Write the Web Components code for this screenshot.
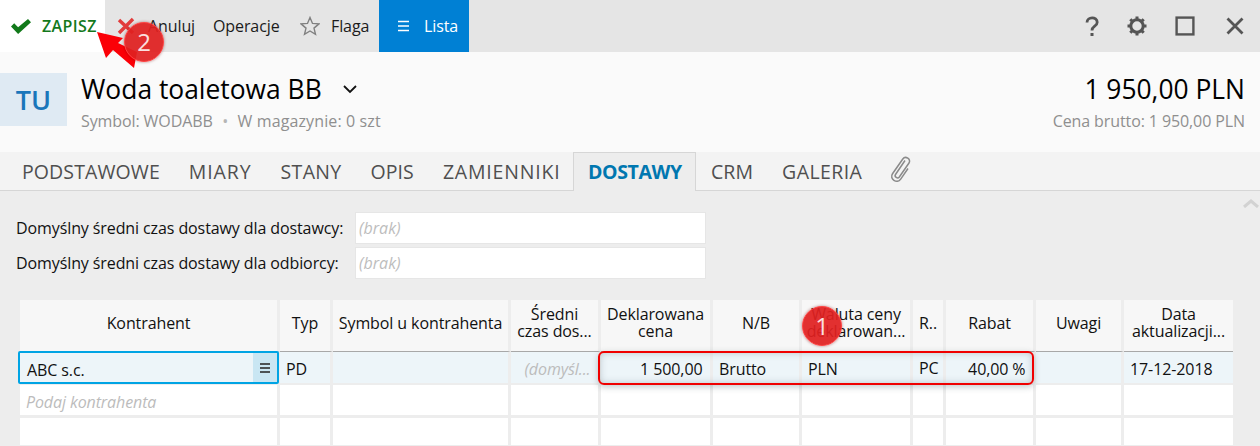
<!DOCTYPE html>
<html lang="pl">
<head>
<meta charset="utf-8">
<title>Woda toaletowa BB</title>
<style>
  html, body { margin: 0; height: 446px; overflow: hidden; }
  body { position: relative; background: #ededed; color: #111; font-family: "Open Sans", "Noto Sans", sans-serif; }
  app-content { display: block; padding-top: 21px; }
</style>
</head>
<body>
  <app-toolbar>
    <tool-button kind="save" style="width:105px;padding-left:10px;--gap:10px"><svg slot="icon" width="22" height="20" viewBox="0 0 22 20"><path d="M1 10.500l3.200-3.200 3.900 3.900L18 3l3 3.200L8.100 18z" fill="#12791a"/></svg>ZAPISZ</tool-button>
    <tool-button style="width:98px;padding-left:11px;--gap:12px"><svg slot="icon" width="20" height="20" viewBox="0 0 20 20"><path d="M3 4l14 13M17 3L3 17" stroke="#e23b3b" stroke-width="3.400" fill="none"/></svg>Anuluj</tool-button>
    <tool-button style="width:85px;padding-left:10px">Operacje</tool-button>
    <tool-button style="width:91px;padding-left:12px"><svg slot="icon" width="20" height="20" viewBox="0 0 20 20"><path d="M10 1.500l2.500 5.900 6.400.5-4.900 4.200 1.500 6.200-5.500-3.300-5.500 3.300 1.500-6.200L1.100 7.900l6.400-.5z" fill="none" stroke="#808080" stroke-width="1.400"/></svg>Flaga</tool-button>
    <tool-button kind="active" style="width:90px;padding-left:18px;--gap:14px"><svg slot="icon" width="13" height="12" viewBox="0 0 13 12"><path d="M1 1.500h11M1 6h11M1 10.500h11" stroke="#fff" stroke-width="1.300"/></svg>Lista</tool-button>
    <svg slot="right" width="24" height="24" viewBox="0 0 24 24"><path d="M7 8.500c0-6 10.200-6 10.200-.3 0 4.300-5.200 3.700-5.200 8.300" fill="none" stroke="#555" stroke-width="2.800"/><rect x="10.500" y="19" width="3" height="3" fill="#555"/></svg>
    <svg slot="right" width="24" height="24" viewBox="0 0 24 24" style="margin-left:21px"><circle cx="12" cy="12" r="6.200" fill="none" stroke="#555" stroke-width="3"/><path d="M12 2.500v4M12 17.500v4M2.500 12h4M17.500 12h4M5.300 5.300l2.800 2.800M15.900 15.900l2.800 2.800M18.700 5.300l-2.800 2.800M8.100 15.900l-2.800 2.800" fill="none" stroke="#555" stroke-width="3"/></svg>
    <svg slot="right" width="24" height="24" viewBox="0 0 24 24" style="margin-left:24px"><rect x="3.600" y="3.600" width="16.800" height="16.800" fill="none" stroke="#555" stroke-width="2.400"/></svg>
    <svg slot="right" width="24" height="24" viewBox="0 0 24 24" style="margin-left:26px"><path d="M4.500 4.500l15 15M19.500 4.500l-15 15" fill="none" stroke="#555" stroke-width="2.800"/></svg>
  </app-toolbar>

  <product-header code="TU" name="Woda toaletowa BB" price="1 950,00 PLN" meta="Symbol: WODABB" stock="W magazynie: 0 szt" gross="Cena brutto: 1 950,00 PLN"></product-header>

  <tab-bar>
    <tab-item>PODSTAWOWE</tab-item>
    <tab-item style="letter-spacing:.9px">MIARY</tab-item>
    <tab-item style="letter-spacing:.3px">STANY</tab-item>
    <tab-item>OPIS</tab-item>
    <tab-item style="letter-spacing:.8px">ZAMIENNIKI</tab-item>
    <tab-item active>DOSTAWY</tab-item>
    <tab-item>CRM</tab-item>
    <tab-item style="letter-spacing:.4px">GALERIA</tab-item>
    <svg width="24" height="28" viewBox="0 0 24 28" style="margin:3px 0 0 11px"><path d="M17 5.500L7.500 19.500c-1.500 2.300 2.200 4.700 3.800 2.500L21 8c2.500-3.700-3.600-7.700-6.200-4L4.500 18.700c-3.500 5.200 4.600 10.500 8.200 5.400l7.300-10.600" fill="none" stroke="#8a8a8a" stroke-width="1.500"/></svg>
  </tab-bar>

  <app-content>
    <field-row label="Domyślny średni czas dostawy dla dostawcy:" placeholder="(brak)"></field-row>
    <field-row label="Domyślny średni czas dostawy dla odbiorcy:" placeholder="(brak)"></field-row>
    <data-grid>
      <grid-cell head>Kontrahent</grid-cell><grid-cell head>Typ</grid-cell><grid-cell head>Symbol u kontrahenta</grid-cell><grid-cell head>Średni<br>czas dos...</grid-cell><grid-cell head>Deklarowana<br>cena</grid-cell><grid-cell head>N/B</grid-cell><grid-cell head>Waluta ceny<br>deklarowan...</grid-cell><grid-cell head>R..</grid-cell><grid-cell head>Rabat</grid-cell><grid-cell head>Uwagi</grid-cell><grid-cell head last>Data<br>aktualizacji...</grid-cell>

      <grid-cell selected>ABC s.c.<svg slot="action" width="10" height="10" viewBox="0 0 10 10"><path d="M0 1h10M0 5h10M0 9h10" stroke="#222" stroke-width="1.400"/></svg></grid-cell><grid-cell current>PD</grid-cell><grid-cell current></grid-cell><grid-cell current hint end>(domyśl...</grid-cell><grid-cell current end>1 500,00</grid-cell><grid-cell current>Brutto</grid-cell><grid-cell current>PLN</grid-cell><grid-cell current raised>PC</grid-cell><grid-cell current end>40,00 %</grid-cell><grid-cell current></grid-cell><grid-cell current last>17-12-2018</grid-cell>

      <grid-cell hint>Podaj kontrahenta</grid-cell><grid-cell></grid-cell><grid-cell></grid-cell><grid-cell></grid-cell><grid-cell></grid-cell><grid-cell></grid-cell><grid-cell></grid-cell><grid-cell></grid-cell><grid-cell></grid-cell><grid-cell></grid-cell><grid-cell last></grid-cell>

      <grid-cell></grid-cell><grid-cell></grid-cell><grid-cell></grid-cell><grid-cell></grid-cell><grid-cell></grid-cell><grid-cell></grid-cell><grid-cell></grid-cell><grid-cell></grid-cell><grid-cell></grid-cell><grid-cell></grid-cell><grid-cell last></grid-cell>
    </data-grid>
    <svg width="18" height="10" viewBox="0 0 18 10" style="position:absolute;left:1242px;top:198px"><path d="M2 9l7-6 7 6" fill="none" stroke="#d2d2d2" stroke-width="3"/></svg>
  </app-content>

  <!-- annotations drawn over the screenshot -->
  <note-frame style="left:598px;top:351px;width:436px;height:34px"></note-frame>
  <svg width="60" height="50" viewBox="0 0 60 50" style="position:absolute;left:92px;top:27px"><path d="M5 5L31 11L26 16L45 25L42 41L21 23L14 31z" fill="#fb0007"/></svg>
  <note-badge style="left:124px;top:22px">2</note-badge>
  <note-badge style="left:802px;top:306px">1</note-badge>

<script>
  class AppToolbar extends HTMLElement {
    constructor() {
      super();
      this.attachShadow({ mode: 'open' }).innerHTML = `
        <style>
          :host { display: flex; height: 52px; background: #e5e5e5; }
          .left { display: flex; flex: 1; }
          .right { display: flex; align-items: center; padding-right: 13px; }
        </style>
        <div class="left"><slot></slot></div>
        <div class="right"><slot name="right"></slot></div>`;
    }
  }

  class ToolButton extends HTMLElement {
    constructor() {
      super();
      this.attachShadow({ mode: 'open' }).innerHTML = `
        <style>
          :host { display: flex; align-items: center; gap: var(--gap, 11px); box-sizing: border-box; height: 52px; font-size: 16px; letter-spacing: -.1px; white-space: nowrap; color: #1b1b1b; }
          :host([kind=save]) { background: #fff; color: #14791c; font-weight: 600; letter-spacing: .4px; }
          :host([kind=active]) { background: #0080d4; color: #fff; }
          ::slotted(svg) { flex: none; }
        </style>
        <slot name="icon"></slot><slot></slot>`;
    }
  }

  class ProductHeader extends HTMLElement {
    constructor() {
      super();
      const a = (n) => this.getAttribute(n);
      this.attachShadow({ mode: 'open' }).innerHTML = `
        <style>
          :host { display: flex; height: 100px; background: #fafafa; box-sizing: border-box; padding: 21px 15px 0 0; }
          .code { width: 67px; height: 53px; background: #dfeaf3; color: #1a76ba; font-size: 27px; font-weight: 600; line-height: 53px; text-align: center; margin-right: 14px; }
          .main { flex: 1; }
          .title { display: flex; align-items: center; gap: 21px; height: 32px; font-size: 26.400px; color: #000; }
          .sub { margin-top: 5px; font-size: 16px; color: #8f8f8f; letter-spacing: -.1px; white-space: nowrap; }
          .dot { margin: 0 9.500px; color: #b5b5b5; }
          .stock { letter-spacing: .12px; }
          .side { text-align: right; }
          .price { height: 32px; line-height: 32px; font-size: 26.400px; color: #000; }
        </style>
        <div class="code">${a('code')}</div>
        <div class="main">
          <div class="title"><span>${a('name')}</span>
            <svg width="14" height="9" viewBox="0 0 14 9"><path d="M1 1l6 6 6-6" fill="none" stroke="#111" stroke-width="1.800"/></svg></div>
          <div class="sub">${a('meta')}<span class="dot">•</span><span class="stock">${a('stock')}</span></div>
        </div>
        <div class="side">
          <div class="price">${a('price')}</div>
          <div class="sub">${a('gross')}</div>
        </div>`;
    }
  }

  class TabBar extends HTMLElement {
    constructor() {
      super();
      this.attachShadow({ mode: 'open' }).innerHTML = `
        <style>
          :host { display: flex; align-items: stretch; height: 39px; box-sizing: border-box; padding-left: 7.500px; background: #f3f3f3; border-bottom: 1px solid #d6d6d6; }
        </style>
        <slot></slot>`;
    }
  }

  class TabItem extends HTMLElement {
    constructor() {
      super();
      this.attachShadow({ mode: 'open' }).innerHTML = `
        <style>
          :host { display: block; box-sizing: border-box; height: 39px; padding: 0 14.500px; font-size: 19.500px; line-height: 39px; color: #4f4f4f; letter-spacing: .1px; border: 0 solid #d6d6d6; }
          :host([active]) { background: #ededed; color: #0077b0; font-weight: 700; letter-spacing: -.35px; padding: 0 13.500px; margin-left: -1.500px; border-width: 1px 1px 0; line-height: 37px; }
        </style>
        <slot></slot>`;
    }
  }

  class FieldRow extends HTMLElement {
    constructor() {
      super();
      this.attachShadow({ mode: 'open' }).innerHTML = `
        <style>
          :host { display: flex; align-items: flex-start; height: 35px; padding-left: 16px; font-size: 16px; color: #111; }
          .label { width: 339px; line-height: 32px; white-space: nowrap; letter-spacing: -.1px; }
          .input { box-sizing: border-box; width: 351px; height: 32px; padding-left: 3px; line-height: 30px; background: #fff; border: 1px solid #e6e6e6; color: #bdbdbd; font-style: italic; }
        </style>
        <div class="label">${this.getAttribute('label')}</div>
        <div class="input">${this.getAttribute('placeholder')}</div>`;
    }
  }

  class DataGrid extends HTMLElement {
    constructor() {
      super();
      this.attachShadow({ mode: 'open' }).innerHTML = `
        <style>
          :host { display: grid; box-sizing: border-box; margin: 18px 0 0 20px; width: 1213px;
            grid-template-columns: 260px 53px 178px 90px 112px 89px 111px 33px 90px 88px 109px;
            grid-template-rows: 52px 33px 33px 30px; }
        </style>
        <slot></slot>`;
    }
  }

  class GridCell extends HTMLElement {
    constructor() {
      super();
      this.attachShadow({ mode: 'open' }).innerHTML = `
        <style>
          :host { display: flex; align-items: center; position: relative; box-sizing: border-box; min-width: 0; padding: 3px 6px 0; background: #fff; border: solid #ededed; border-width: 0 3px 3px 0; font-size: 16px; letter-spacing: -.1px; white-space: nowrap; color: #111; }
          :host([last]) { border-right-width: 0; }
          :host([head]) { background: #f7f7f7; justify-content: center; text-align: center; line-height: 17px; border-bottom: 1px solid #a8a8a8; white-space: normal; padding: 0 2px 5px; }
          :host([current]) { background: #edf5f9; border-bottom-width: 2px; }
          :host([end]) { justify-content: flex-end; padding-right: 7.500px; }
          :host([raised]) { align-items: flex-start; padding-top: 5px; }
          :host([hint]) { color: #bcbcbc; font-style: italic; }
          :host([selected]) { background: #edf5f9; margin: -1px 1px 0 -2px; outline: 2px solid #00a4e4; outline-offset: -2px; border: 0; border-radius: 2px; height: 33px; padding: 4px 6px 0 9px; z-index: 1; }
          .action { display: none; }
          :host([selected]) .action { display: flex; align-items: center; justify-content: center; position: absolute; right: 2px; top: 2px; bottom: 2px; width: 24px; background: #c9e6f3; }
        </style>
        <slot></slot><div class="action"><slot name="action"></slot></div>`;
    }
  }

  class NoteBadge extends HTMLElement {
    constructor() {
      super();
      this.attachShadow({ mode: 'open' }).innerHTML = `
        <style>
          :host { position: absolute; box-sizing: border-box; width: 40px; height: 40px; border-radius: 50%; background: rgba(224,32,32,.93); border: 1px solid #f44; box-shadow: 0 0 3px rgba(120,0,0,.5); color: #fbe0e0; font-size: 24px; font-weight: 500; line-height: 38px; text-align: center; }
        </style>
        <slot></slot>`;
    }
  }

  class NoteFrame extends HTMLElement {
    constructor() {
      super();
      this.attachShadow({ mode: 'open' }).innerHTML = `
        <style>
          :host { position: absolute; box-sizing: border-box; border: 2px solid #f00000; border-radius: 6px; box-shadow: 0 2px 6px rgba(40,60,70,.28), inset 0 0 7px rgba(40,60,70,.25); }
        </style>`;
    }
  }

  customElements.define('app-toolbar', AppToolbar);
  customElements.define('tool-button', ToolButton);
  customElements.define('product-header', ProductHeader);
  customElements.define('tab-bar', TabBar);
  customElements.define('tab-item', TabItem);
  customElements.define('field-row', FieldRow);
  customElements.define('data-grid', DataGrid);
  customElements.define('grid-cell', GridCell);
  customElements.define('note-badge', NoteBadge);
  customElements.define('note-frame', NoteFrame);
</script>
</body>
</html>
